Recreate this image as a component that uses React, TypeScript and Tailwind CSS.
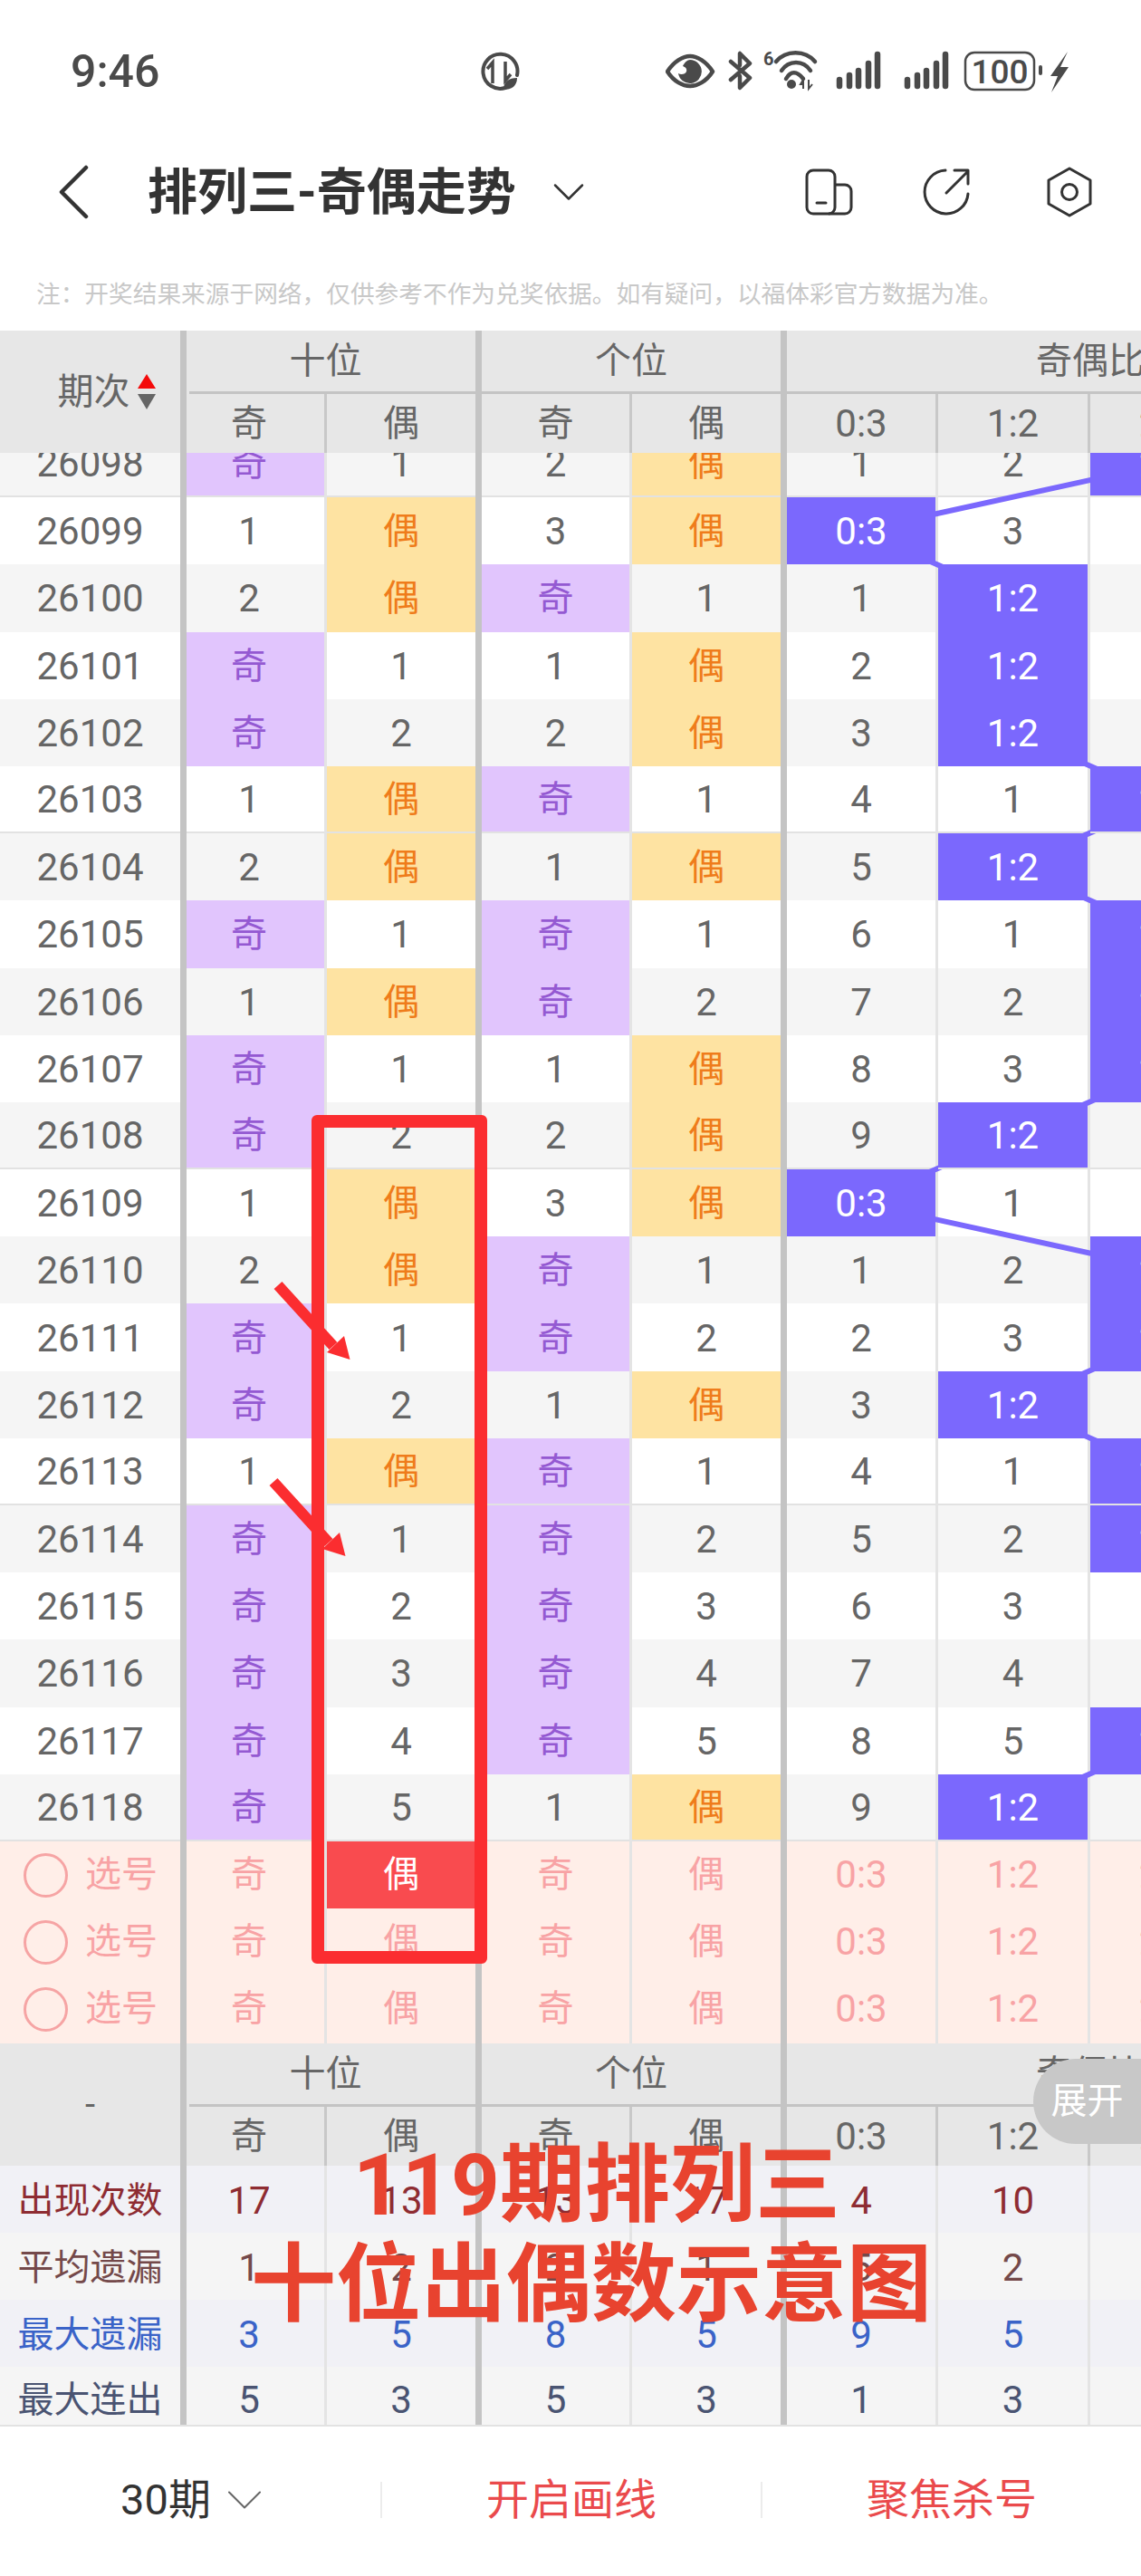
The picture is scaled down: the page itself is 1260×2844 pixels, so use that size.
import { ChevronDown } from "lucide-react";

type Cell = string | number;

// period, 十位奇, 十位偶, 个位奇, 个位偶, 0:3, 1:2, 2:1
const rows: [string, Cell, Cell, Cell, Cell, Cell, Cell, Cell][] = [
  ["26098", "奇", 1, 2, "偶", 1, 2, "2:1"],
  ["26099", 1, "偶", 3, "偶", "0:3", 3, 1],
  ["26100", 2, "偶", "奇", 1, 1, "1:2", 2],
  ["26101", "奇", 1, 1, "偶", 2, "1:2", 3],
  ["26102", "奇", 2, 2, "偶", 3, "1:2", 4],
  ["26103", 1, "偶", "奇", 1, 4, 1, "2:1"],
  ["26104", 2, "偶", 1, "偶", 5, "1:2", 1],
  ["26105", "奇", 1, "奇", 1, 6, 1, "2:1"],
  ["26106", 1, "偶", "奇", 2, 7, 2, "2:1"],
  ["26107", "奇", 1, 1, "偶", 8, 3, "2:1"],
  ["26108", "奇", 2, 2, "偶", 9, "1:2", 1],
  ["26109", 1, "偶", 3, "偶", "0:3", 1, 2],
  ["26110", 2, "偶", "奇", 1, 1, 2, "2:1"],
  ["26111", "奇", 1, "奇", 2, 2, 3, "2:1"],
  ["26112", "奇", 2, 1, "偶", 3, "1:2", 1],
  ["26113", 1, "偶", "奇", 1, 4, 1, "2:1"],
  ["26114", "奇", 1, "奇", 2, 5, 2, "2:1"],
  ["26115", "奇", 2, "奇", 3, 6, 3, 1],
  ["26116", "奇", 3, "奇", 4, 7, 4, 2],
  ["26117", "奇", 4, "奇", 5, 8, 5, "2:1"],
  ["26118", "奇", 5, 1, "偶", 9, "1:2", 1],
];

// column holding the trend line per row; 3 is the 3:0 column, off the right edge
const hits = [2, 0, 1, 1, 1, 2, 1, 2, 2, 2, 1, 0, 2, 2, 1, 2, 2, 3, 3, 2, 1];
const hitX = [949, 1119, 1288, 1456];

const widths = [
  "w-[152px] pr-[14px]",
  "w-[164px]",
  "w-[163px]",
  "w-[164px]",
  "w-[164px]",
  "w-[165px]",
  "w-[165px]",
];
const picks = ["奇", "偶", "奇", "偶", "0:3", "1:2", "2:1"];

const Sep = ({ col }: { col: number }) => {
  if (col === 1 || col === 3) return <div className="w-[7px] shrink-0 bg-[#c4c4c4]" />;
  return <div className="w-[3px] shrink-0 bg-[#e4e4e4]" />;
};

const cellStyle = (v: Cell) => {
  if (v === "奇") return "bg-[#e1c5fd] text-[#9459d2] text-[40px]";
  if (v === "偶") return "bg-[#fee3a2] text-[#ef7c1b] text-[40px]";
  if (typeof v === "string") return "relative z-10 bg-[#7b68fd] text-white";
  return "text-[#666666]";
};

const Row = ({ data, stripe, line }: { data: typeof rows[number]; stripe: boolean; line: boolean }) => (
  <div className={`flex h-[74.2px] ${stripe ? "bg-[#f5f5f5]" : "bg-white"}`}>
    <div
      className={`flex w-[199px] shrink-0 items-center justify-center pt-[2px] text-[#666666] ${
        line ? "border-b-2 border-[#e2e2e2]" : ""
      }`}
    >
      {data[0]}
    </div>
    <div className="w-[7px] shrink-0 bg-[#c4c4c4]" />
    {widths.map((w, i) => (
      <div key={i} className="contents">
        <div
          className={`flex shrink-0 items-center justify-center pt-[2px] ${w} ${cellStyle(data[i + 1])} ${
            line ? "border-b-2 border-[#e2e2e2]" : ""
          }`}
        >
          {data[i + 1]}
        </div>
        <Sep col={i} />
      </div>
    ))}
  </div>
);

const PickRow = ({ chosen }: { chosen?: boolean }) => (
  <div className="flex h-[74.2px] bg-[#ffeee8] text-[#f8a3a5]">
    <div className="flex w-[199px] shrink-0 items-center gap-[19px] pl-[26px] text-[40px]">
      <span className="h-[49px] w-[49px] rounded-full border-[3px] border-[#f6a4a4]" />
      选号
    </div>
    <div className="w-[7px] shrink-0 bg-[#c4c4c4]" />
    {widths.map((w, i) => (
      <div key={i} className="contents">
        <div
          className={`flex shrink-0 items-center justify-center ${w} ${i < 4 ? "text-[40px]" : ""} ${
            chosen && i === 1 ? "bg-[#f94b4f] text-white" : ""
          }`}
        >
          {picks[i]}
        </div>
        <Sep col={i} />
      </div>
    ))}
  </div>
);

const SubHead = ({ label, w, last }: { label: string; w: string; last?: boolean }) => (
  <>
    <div className={`flex shrink-0 items-center justify-center ${w}`}>{label}</div>
    {!last && <div className="w-[3px] shrink-0 bg-[#c8c8c8]" />}
  </>
);

const TableHead = ({ corner }: { corner: React.ReactNode }) => (
  <div className="flex h-[135px] shrink-0 overflow-hidden bg-[#e7e7e7] text-[40px] leading-none text-[#666666]">
    <div className="flex w-[199px] shrink-0 items-center justify-center">{corner}</div>
    <div className="w-[7px] shrink-0 bg-[#c4c4c4]" />
    <div className="flex w-[319px] shrink-0 flex-col">
      <div className="flex h-[67px] items-center justify-center pr-[12px]">十位</div>
      <div className="ml-[3px] h-[3px] bg-[#c4c4c4]" />
      <div className="flex h-[65px]">
        <SubHead label="奇" w="w-[152px] pr-[14px]" />
        <SubHead label="偶" w="w-[164px]" last />
      </div>
    </div>
    <div className="w-[7px] shrink-0 bg-[#c4c4c4]" />
    <div className="flex w-[330px] shrink-0 flex-col">
      <div className="flex h-[67px] items-center justify-center">个位</div>
      <div className="h-[3px] bg-[#c4c4c4]" />
      <div className="flex h-[65px]">
        <SubHead label="奇" w="w-[163px]" />
        <SubHead label="偶" w="w-[164px]" last />
      </div>
    </div>
    <div className="w-[7px] shrink-0 bg-[#c4c4c4]" />
    <div className="flex w-[670px] shrink-0 flex-col">
      <div className="flex h-[67px] items-center justify-center">奇偶比</div>
      <div className="h-[3px] bg-[#c4c4c4]" />
      <div className="flex h-[65px] text-[42px]">
        <SubHead label="0:3" w="w-[164px]" />
        <SubHead label="1:2" w="w-[165px]" />
        <SubHead label="2:1" w="w-[165px]" />
        <SubHead label="3:0" w="w-[165px]" last />
      </div>
    </div>
  </div>
);

const stats = [
  { label: "出现次数", color: "text-[#8e2c32]", bg: "bg-[#f1f1f6]", h: "h-[74px]", pad: "pt-[3px]", vals: [17, 13, 13, 17, 4, 10, 12] },
  { label: "平均遗漏", color: "text-[#74494a]", bg: "bg-[#f5f5f5]", h: "h-[74px]", pad: "pt-[3px]", vals: [1, 2, 2, 1, 5, 2, 1] },
  { label: "最大遗漏", color: "text-[#3a63c8]", bg: "bg-[#f1f1f6]", h: "h-[74px]", pad: "pt-[3px]", vals: [3, 5, 8, 5, 9, 5, 4] },
  { label: "最大连出", color: "text-[#4a5472]", bg: "bg-[#f5f5f5]", h: "h-[64px]", pad: "pt-[10px]", vals: [5, 3, 5, 3, 1, 3, 3] },
];

const StatusIcons = () => (
  <svg width="445" height="46" viewBox="735 56 445 46" fill="none" className="shrink-0">
    {/* eye */}
    <path d="M737 79c7-11 17-17 25-17s18 6 25 17c-7 11-17 16-25 16s-18-5-25-16Z" stroke="#4a4a4a" strokeWidth="4.5" strokeLinejoin="round" />
    <path d="M762 66a13 13 0 1 1-13 15c3 2 8 1 9-2 1-4-2-5-4-6 2-4 5-7 8-7Z" fill="#4a4a4a" />
    {/* bluetooth, broken spine */}
    <path d="M807 68L828 86 817 97V84M807 88L828 70 817 59V72" stroke="#4a4a4a" strokeWidth="4.5" strokeLinecap="round" strokeLinejoin="round" />
    {/* wifi */}
    <text x="843" y="72" fontFamily="Roboto" fontSize="20" fontWeight="700" fill="#4a4a4a">6</text>
    <path d="M857 68c11-13 32-13 43 0M863 78c8-12 24-12 32 0M868 87c5-9 12-9 19 0" stroke="#4a4a4a" strokeWidth="4.5" strokeLinecap="round" />
    <circle cx="874" cy="93" r="5" fill="#4a4a4a" />
    <path d="M887 88l-3 5h3M887 88v10M893 88v10l4-5" stroke="#4a4a4a" strokeWidth="2" />
    {/* signal, two SIMs */}
    {[0, 75].map((dx) => (
      <g key={dx} stroke="#4a4a4a" strokeWidth="6.5" strokeLinecap="round">
        <path d={`M${927 + dx} 88v7M${938 + dx} 83v12M${948 + dx} 78v17M${959 + dx} 70v25M${969 + dx} 60v35`} />
      </g>
    ))}
    {/* battery */}
    <rect x="1066" y="58" width="76" height="41" rx="10" stroke="#4a4a4a" strokeWidth="2.5" />
    <text x="1104" y="92" textAnchor="middle" fontFamily="Roboto" fontSize="37" fontWeight="500" fill="#4a4a4a">100</text>
    <rect x="1147" y="72" width="4" height="11" rx="2" fill="#4a4a4a" />
    <path d="M1179 57L1160 84h8l-7 18 19-28h-9l8-17Z" fill="#4a4a4a" />
  </svg>
);

const DataSaver = () => (
  <svg width="46" height="46" viewBox="528 58 46 46" fill="none" className="shrink-0">
    <path d="M558 99a19 19 0 1 1 13-14" stroke="#4a4a4a" strokeWidth="4" strokeLinecap="round" />
    <path d="M544 94V71l-6 7M558 70v21l6-7" stroke="#4a4a4a" strokeWidth="3.5" />
    <path d="M556 101c0-9 6-13 15-13 0 9-6 13-15 13Z" fill="#4a4a4a" />
  </svg>
);

const Annotations = () => (
  <svg width="1260" height="2844" viewBox="0 0 1260 2844" fill="none" className="absolute inset-0 z-20">
    {[0, 1].map((i) => (
      <g key={i} transform={i ? "translate(-5 217)" : undefined}>
        <path d="M307 1419L368 1486" stroke="#fb2d30" strokeWidth="12" />
        <path d="M386.5 1501L380 1475L361 1493Z" fill="#fb2d30" />
      </g>
    ))}
  </svg>
);

export default function App() {
  const points = hits
    .map((c, i) => `${hitX[c]},${85.8 + 74.2 * (i - 1)}`)
    .join(" ");

  return (
    <div className="relative flex h-[2844px] w-[1260px] flex-col overflow-hidden bg-white font-[Roboto,'Noto_Sans_CJK_SC',sans-serif] text-[42px] leading-none">
      {/* status bar */}
      <div className="flex h-[130px] shrink-0 items-start pt-[56px] text-[#4a4a4a]">
        <div className="w-[528px] shrink-0 pl-[78px] text-[50px] leading-[46px] font-medium">9:46</div>
        <DataSaver />
        <div className="w-[161px] shrink-0" />
        <StatusIcons />
      </div>

      {/* nav */}
      <div className="flex h-[164px] shrink-0 items-center text-[#333333]">
        <svg width="36" height="60" viewBox="0 0 36 60" fill="none" className="ml-[63px] shrink-0">
          <path d="M32 3L5 30L32 57" stroke="#333" strokeWidth="4.5" strokeLinecap="round" strokeLinejoin="round" />
        </svg>
        <div className="ml-[64px] w-[406px] shrink-0 text-[55px] font-bold whitespace-nowrap">排列三-奇偶走势</div>
        <ChevronDown className="ml-[29px] h-[60px] w-[60px] shrink-0" strokeWidth={1} />
        <svg width="54" height="52" viewBox="0 0 54 52" fill="none" className="ml-[231px] shrink-0">
          <rect x="2" y="2" width="31" height="48" rx="7" stroke="#333" strokeWidth="3" />
          <path d="M33 18h11a7 7 0 0 1 7 7v18a7 7 0 0 1-7 7H26" stroke="#333" strokeWidth="3" />
          <path d="M13 38h10" stroke="#333" strokeWidth="3" strokeLinecap="round" />
        </svg>
        <svg width="54" height="54" viewBox="0 0 54 54" fill="none" className="ml-[75px] shrink-0">
          <path d="M26 3a24 24 0 1 0 25 26" stroke="#333" strokeWidth="3" strokeLinecap="round" />
          <path d="M27 28L51 4M36 3h15v15" stroke="#333" strokeWidth="3" strokeLinecap="round" strokeLinejoin="round" />
        </svg>
        <svg width="52" height="58" viewBox="0 0 52 58" fill="none" className="ml-[83px] shrink-0">
          <path d="M26 3l23 13v26L26 55 3 42V16L26 3Z" stroke="#333" strokeWidth="3" strokeLinejoin="round" />
          <circle cx="26" cy="29" r="8.5" stroke="#333" strokeWidth="3" />
        </svg>
      </div>

      {/* notice */}
      <div className="flex h-[71px] shrink-0 items-start pt-[18px] pl-[40px] text-[26.7px] text-[#c8c8c8]">
        注：开奖结果来源于网络，仅供参考不作为兑奖依据。如有疑问，以福体彩官方数据为准。
      </div>

      <TableHead
        corner={
          <div className="flex items-center gap-[8px] pl-[36px]">
            <span>期次</span>
            <span className="flex flex-col gap-[6px]">
              <span className="h-0 w-0 border-x-[10px] border-b-[16px] border-x-transparent border-b-[#f40a0a]" />
              <span className="h-0 w-0 border-x-[10px] border-t-[17px] border-x-transparent border-t-[#666666]" />
            </span>
          </div>
        }
      />

      {/* scrolled body */}
      <div className="relative h-[1756px] shrink-0 overflow-hidden">
        <div className="-mt-[25px]">
          {rows.map((r, i) => (
            <Row key={r[0]} data={r} stripe={i % 2 === 0} line={i % 5 === 0} />
          ))}
          <PickRow chosen />
          <PickRow />
          <PickRow />
        </div>
        <svg width="1260" height="1756" viewBox="0 0 1260 1756" fill="none" className="absolute inset-0 z-[5]">
          <polyline points={points} stroke="#7b68fd" strokeWidth="6" />
        </svg>
      </div>

      <TableHead corner={<span className="text-[#666666]">-</span>} />

      {stats.map((s) => (
        <div key={s.label} className={`flex shrink-0 ${s.h} ${s.bg} ${s.color}`}>
          <div className={`flex w-[199px] shrink-0 items-center justify-center text-[40px] ${s.pad}`}>{s.label}</div>
          <div className="w-[7px] shrink-0 bg-[#c4c4c4]" />
          {widths.map((w, i) => (
            <div key={i} className="contents">
              <div className={`flex shrink-0 items-center justify-center ${w} ${s.pad}`}>{s.vals[i]}</div>
              <Sep col={i} />
            </div>
          ))}
        </div>
      ))}

      {/* footer */}
      <div className="grid flex-1 grid-cols-3 items-center border-t-2 border-[#e2e2e2] pb-[4px] text-[47px]">
        <div className="flex items-center justify-center gap-[3px] text-[#333333]">
          30期
          <ChevronDown className="-mr-[17px] h-[68px] w-[68px] text-[#666666]" strokeWidth={0.7} />
        </div>
        <div className="flex h-[40px] items-center justify-center border-l-2 border-[#ececec] text-[#ea4a4c]">开启画线</div>
        <div className="flex h-[40px] items-center justify-center border-l-2 border-[#ececec] text-[#ea4a4c]">聚焦杀号</div>
      </div>

      {/* 展开 pill */}
      <div className="absolute top-[2273px] right-0 flex h-[94px] w-[119px] items-center justify-center rounded-l-[47px] bg-[#c8c8c8] text-[40px] text-white">
        展开
      </div>

      {/* red annotations laid over the screenshot */}
      <div className="absolute top-[1231px] left-[344px] z-20 h-[937px] w-[194px] rounded-[6px] border-[14px] border-[#fb2d30]" />
      <Annotations />
      <div className="absolute top-[2358px] left-[200px] z-20 w-[906px] text-center text-[94px] leading-[110px] font-bold text-[#e8432f]">
        <div className="pl-[12px]">119期排列三</div>
        <div>十位出偶数示意图</div>
      </div>
    </div>
  );
}
